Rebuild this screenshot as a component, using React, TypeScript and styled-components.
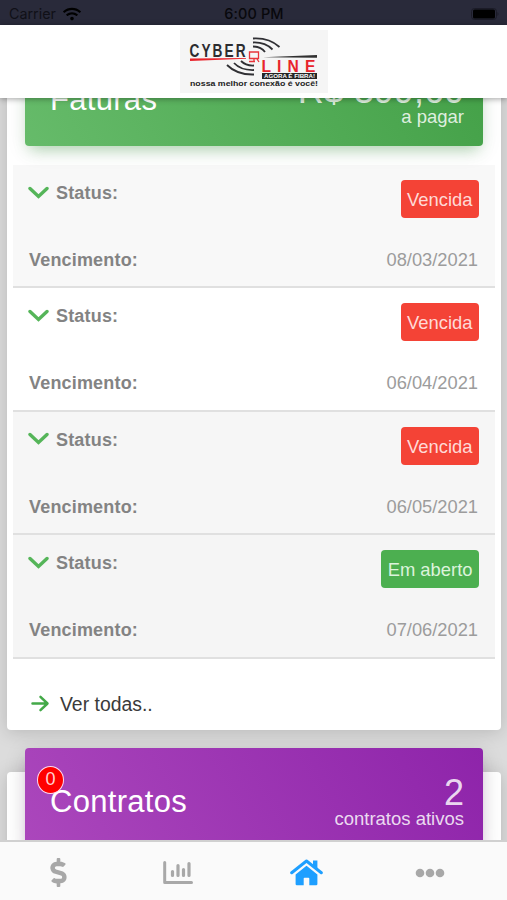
import React from "react";
import styled, { createGlobalStyle } from "styled-components";
import { FaDollarSign, FaWifi } from "react-icons/fa";

const GlobalStyle = createGlobalStyle`
  * { box-sizing: border-box; }
  body { margin: 0; background: #dcdcdc; font-family: "Liberation Sans", Arial, sans-serif; }
`;

const Screen = styled.div`
  width: 507px;
  height: 900px;
  display: flex;
  flex-direction: column;
  overflow: hidden;
  background: #dcdcdc;
`;

const StatusBar = styled.div`
  height: 25px;
  flex: none;
  display: grid;
  grid-template-columns: 1fr auto 1fr;
  align-items: center;
  padding: 2px 8px 0 9px;
  background: #292a3a;
  color: #08080c;
  font: 14.3px "Inter", sans-serif;
`;

const Carrier = styled.div`
  display: flex;
  align-items: center;
  gap: 7px;
  color: #101017;
  svg { color: #000; }
`;

const Clock = styled.div`
  font-weight: 500;
  font-size: 14.5px;
  letter-spacing: 0.1px;
`;

const Battery = styled.svg`
  justify-self: end;
`;

const TopBar = styled.header`
  height: 73px;
  flex: none;
  display: flex;
  justify-content: center;
  padding: 5px 0 0 1px;
  background: #fff;
  position: relative;
  z-index: 2;
  box-shadow: 0 1px 6px rgba(0, 0, 0, 0.35);
`;

const Content = styled.main`
  flex: 1;
  min-height: 0;
  overflow: hidden;
`;

const Cards = styled.div`
  margin-top: -28px;
  padding: 0 6px 0 7px;
  display: flex;
  flex-direction: column;
  gap: 42px;
`;

const Card = styled.section`
  background: #fff;
  border-radius: 4px;
  box-shadow: 0 2px 18px rgba(0, 0, 0, 0.17);
`;

const Banner = styled.div<{ $tone: "green" | "purple" }>`
  position: relative;
  top: -24px;
  height: 100px;
  margin: 0 18.5px -24px 18px;
  padding: 25px 18.5px 0 25px;
  display: flex;
  justify-content: space-between;
  border-radius: 4px;
  color: #fff;
  background: ${(p) =>
    p.$tone === "green"
      ? "linear-gradient(60deg, #66bb6a, #43a047)"
      : "linear-gradient(60deg, #ab47bc, #8e24aa)"};
  box-shadow: ${(p) =>
    p.$tone === "green"
      ? "0 5px 22px rgba(0,0,0,.08), 0 8px 14px -5px rgba(76,175,80,.4)"
      : "0 5px 22px rgba(0,0,0,.14), 0 8px 12px -5px rgba(156,39,176,.35)"};
`;

const BannerTitle = styled.h2`
  margin: 10px 0 0;
  font-size: 31px;
  line-height: 38px;
  font-weight: 400;
  letter-spacing: 0.3px;
`;

const Totals = styled.div`
  text-align: right;
  color: rgba(255, 255, 255, 0.84);
`;

const Amount = styled.div`
  margin-top: 3px;
  font-size: 36px;
  line-height: 34px;
`;

const AmountNote = styled.div`
  font-size: 18.5px;
  line-height: 18px;
`;

const Counter = styled.span`
  position: absolute;
  left: 12px;
  top: 18px;
  width: 27px;
  height: 28px;
  border: 1.5px solid #ffd9ee;
  border-radius: 50%;
  background: #f00;
  color: #ffd0d0;
  font-size: 18px;
  line-height: 25px;
  text-align: center;
`;

const InvoiceList = styled.ul`
  list-style: none;
  margin: 19px 6px 0;
  padding: 0;
`;

const Invoice = styled.li<{ $shade: string }>`
  height: 123.4px;
  padding: 15px 16px 0 15px;
  border-bottom: 2px solid #e0e0e0;
  background: ${(p) => p.$shade};
`;

const Line = styled.div<{ $h: number }>`
  height: ${(p) => p.$h}px;
  display: flex;
  justify-content: space-between;
  align-items: flex-start;
`;

const Label = styled.span`
  display: flex;
  align-items: center;
  gap: 7px;
  padding-left: 1px;
  color: #838383;
  font-size: 18px;
  font-weight: 700;
  line-height: 26px;
  letter-spacing: 0.18px;
  svg { margin-left: -1px; }
`;

const Badge = styled.span<{ $open: boolean }>`
  height: 38px;
  padding: 0 6.5px;
  border-radius: 4px;
  background: ${(p) => (p.$open ? "#4caf50" : "#f44336")};
  color: ${(p) => (p.$open ? "#dcf3dc" : "#ffdad6")};
  font-size: 18.4px;
  line-height: 39px;
`;

const DueDate = styled.span`
  margin-right: 1px;
  color: #9c9c9c;
  font-size: 18.3px;
  line-height: 26px;
`;

const SeeAll = styled.a`
  height: 71.4px;
  padding: 17px 0 0 24px;
  display: flex;
  align-items: flex-start;
  gap: 10px;
  color: #3a3a3a;
  font-size: 19.4px;
  line-height: 56px;
  svg { margin-top: 18px; }
`;

const TabBar = styled.nav`
  height: 60px;
  flex: none;
  display: grid;
  grid-template-columns: 116px 123px 134px 114px;
  align-items: center;
  justify-items: center;
  padding-top: 3px;
  border-top: 2px solid #d0d0d0;
  background: #fafafa;
  position: relative;
  z-index: 2;
`;

const Tab = styled.button<{ $active?: boolean }>`
  display: flex;
  padding: 0;
  border: 0;
  background: none;
  color: ${(p) => (p.$active ? "#1e9fff" : "#a8a8a8")};
`;

const invoices = [
  { status: "Vencida", due: "08/03/2021", shade: "#f8f8f8" },
  { status: "Vencida", due: "06/04/2021", shade: "#ffffff" },
  { status: "Vencida", due: "06/05/2021", shade: "#f6f6f6" },
  { status: "Em aberto", due: "07/06/2021", shade: "#f5f5f5" },
];

const ChevronIcon = () => (
  <svg width="21" height="21" viewBox="0 0 21 21">
    <path d="M2 5.500L10.500 13.500L19 5.500" fill="none" stroke="#55b559" strokeWidth="3.400" strokeLinecap="round" />
  </svg>
);

const ArrowIcon = () => (
  <svg width="19" height="19" viewBox="0 0 19 19">
    <path d="M1.500 9.500H16M9.500 2.800L16.500 9.500L9.500 16.200" fill="none" stroke="#43a948" strokeWidth="2.500" strokeLinecap="round" strokeLinejoin="round" />
  </svg>
);

const ChartIcon = () => (
  <svg width="30" height="24" viewBox="0 0 30 24">
    <path d="M1.700 1.500V21.400H28.500" fill="none" stroke="currentColor" strokeWidth="3" strokeLinecap="round" strokeLinejoin="round" />
    <path d="M9.500 10.500V14.500M15 4.500V14.500M20.500 8.500V14.500M26 2.500V14.500" stroke="currentColor" strokeWidth="3.200" strokeLinecap="round" />
  </svg>
);

const HomeIcon = () => (
  <svg width="33" height="27" viewBox="0 0 33 27" fill="currentColor">
    <path d="M23 1.500h4.400v9.500l-4.400-4z" />
    <path d="M1.700 13.700L16.500 2L31.300 13.700" fill="none" stroke="currentColor" strokeWidth="3" strokeLinecap="round" strokeLinejoin="round" />
    <path d="M16.500 6.700L27.400 15.400V25Q27.400 26.300 26.100 26.300H19.300V19.500Q19.300 18.700 18.500 18.700H14.500Q13.700 18.700 13.700 19.500V26.300H6.900Q5.600 26.300 5.600 25V15.400Z" />
  </svg>
);

const DotsIcon = () => (
  <svg width="30" height="10" viewBox="0 0 30 10" fill="currentColor">
    <circle cx="5" cy="5" r="4.300" />
    <circle cx="15" cy="5" r="4.300" />
    <circle cx="25" cy="5" r="4.300" />
  </svg>
);

function Logo() {
  return (
    <svg width="148" height="63" viewBox="0 0 148 63">
      <rect width="148" height="63" fill="#f5f5f5" />
      <g fontFamily="Liberation Sans, sans-serif" fontWeight="700">
        <text transform="translate(9.500 27) scale(0.760 1)" fontSize="18" letterSpacing="2.700" fill="#2c2c30">CYBER</text>
        <text transform="translate(81.500 41.500) scale(0.920 1)" fontSize="17" letterSpacing="6.600" fill="#e8242c">LINE</text>
        <rect x="82" y="43" width="55" height="6" fill="#252525" />
        <text x="84" y="48.200" fontSize="6" fill="#fff" textLength="51" lengthAdjust="spacingAndGlyphs">AGORA É FIBRA!</text>
        <text x="10" y="56" fontSize="6.300" fill="#222" textLength="128" lengthAdjust="spacingAndGlyphs">nossa melhor conexão é você!</text>
      </g>
      <path d="M10 28.500L66 28V28.700L10 31Z" fill="#e8242c" />
      <path d="M83 27.300L137 25V27.800Z" fill="#303030" />
      <g fill="none" stroke="#303034" strokeWidth="1.800">
        <path d="M73 8.500Q89 7.500 99.500 17M73 12.500Q85 12 92.500 19.500M73 16.500Q81 16.500 85 22" />
        <path d="M47 35Q57 45 74 44.500M54 33Q61 40.500 74 40M61 31Q66 36 74 35.500" />
      </g>
      <path d="M69.500 22h9v6.500h-9zM74 28.500v3M69 31.500h6M77 29l2 3" fill="none" stroke="#e8343a" strokeWidth="1.300" />
    </svg>
  );
}

export default function App() {
  return (
    <Screen>
      <GlobalStyle />
      <StatusBar>
        <Carrier>Carrier <FaWifi size={18} /></Carrier>
        <Clock>6:00 PM</Clock>
        <Battery width="30" height="12" viewBox="0 0 30 12">
          <rect x="2.500" y="0.500" width="25" height="11" rx="3" fill="none" stroke="#1b1b27" />
          <rect x="4" y="1.500" width="22" height="9" rx="1.500" fill="#000" />
          <path d="M28.500 4v4q2-2 0-4" fill="#1b1b27" />
        </Battery>
      </StatusBar>
      <TopBar><Logo /></TopBar>
      <Content>
        <Cards>
          <Card>
            <Banner $tone="green">
              <BannerTitle>Faturas</BannerTitle>
              <Totals>
                <Amount>R$ 399,60</Amount>
                <AmountNote>a pagar</AmountNote>
              </Totals>
            </Banner>
            <InvoiceList>
              {invoices.map((item) => (
                <Invoice key={item.due} $shade={item.shade}>
                  <Line $h={67}>
                    <Label><ChevronIcon />Status:</Label>
                    <Badge $open={item.status !== "Vencida"}>{item.status}</Badge>
                  </Line>
                  <Line $h={26}>
                    <Label>Vencimento:</Label>
                    <DueDate>{item.due}</DueDate>
                  </Line>
                </Invoice>
              ))}
            </InvoiceList>
            <SeeAll><ArrowIcon />Ver todas..</SeeAll>
          </Card>
          <Card>
            <Banner $tone="purple">
              <BannerTitle>Contratos</BannerTitle>
              <Counter>0</Counter>
              <Totals>
                <Amount>2</Amount>
                <AmountNote>contratos ativos</AmountNote>
              </Totals>
            </Banner>
            <SeeAll />
          </Card>
        </Cards>
      </Content>
      <TabBar>
        <Tab aria-label="Faturas"><FaDollarSign size={29} /></Tab>
        <Tab aria-label="Consumo"><ChartIcon /></Tab>
        <Tab aria-label="Início" $active><HomeIcon /></Tab>
        <Tab aria-label="Mais"><DotsIcon /></Tab>
      </TabBar>
    </Screen>
  );
}
